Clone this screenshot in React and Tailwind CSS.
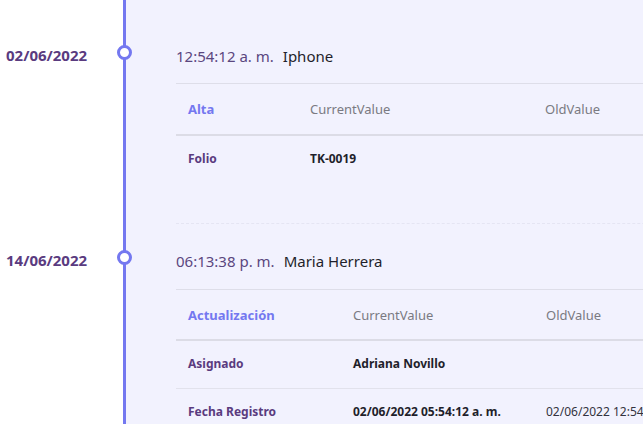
const entries = [
  {
    date: '02/06/2022',
    time: '12:54:12 a. m.',
    user: 'Iphone',
    action: 'Alta',
    cols: ['w-[122px]', 'w-[235px]'],
    rows: [{ field: 'Folio', current: 'TK-0019', old: '' }],
    first: true,
  },
  {
    date: '14/06/2022',
    time: '06:13:38 p. m.',
    user: 'Maria Herrera',
    action: 'Actualización',
    cols: ['w-[165px]', 'w-[193px]'],
    rows: [
      { field: 'Asignado', current: 'Adriana Novillo', old: '' },
      { field: 'Fecha Registro', current: '02/06/2022 05:54:12 a. m.', old: '02/06/2022 12:54:12 a. m.' },
    ],
  },
];

const Entry = ({ entry }) => (
  <div className="flex">
    {/* Date */}
    <div className={`w-[123px] shrink-0 pl-[6px] ${entry.first ? 'pt-[43px]' : 'pt-[24px]'}`}>
      <div className="h-[24px] leading-[24px] text-[15px] font-bold text-[#5a3b7f]">
        {entry.date}
      </div>
    </div>

    {/* Timeline + content */}
    <div className="relative flex-1 border-l-[3px] border-[#7478f0] bg-[#f2f2fe] pl-[50px]">
      <div
        className={`absolute left-[-9px] w-[15px] h-[15px] rounded-full border-[3px] border-[#7478f0] bg-white ${
          entry.first ? 'top-[45px]' : 'top-[26px]'
        }`}
      />
      <div
        className={`border-b border-dashed border-[#e5e5f3] ${
          entry.first ? 'pt-[44px] pb-[40px]' : 'pt-[26px] pb-[40px]'
        }`}
      >
        <div className="h-[24px] flex items-center gap-[9px] text-[15px] whitespace-nowrap">
          <span className="text-[#5b477f]">{entry.time}</span>
          <span className="text-[#1f1f2b]">{entry.user}</span>
        </div>

        <table className="mt-[15px] w-[720px] table-fixed border-collapse text-left">
          <colgroup>
            <col className={entry.cols[0]} />
            <col className={entry.cols[1]} />
            <col />
          </colgroup>
          <thead>
            <tr className="h-[51px] border-t border-b-2 border-t-[#dedee9] border-b-[#dcdce6]">
              <th className="pl-[12px] pt-[2px] text-[13px] font-bold text-[#7478f0]">{entry.action}</th>
              <th className="pl-[12px] pt-[2px] text-[13px] font-normal text-[#7a7a82]">CurrentValue</th>
              <th className="pl-[12px] pt-[2px] text-[13px] font-normal text-[#7a7a82]">OldValue</th>
            </tr>
          </thead>
          <tbody>
            {entry.rows.map((row, i) => (
              <tr
                key={row.field}
                className={`h-[48px] ${i < entry.rows.length - 1 ? 'border-b border-[#e2e2ec]' : ''}`}
              >
                <td className="pl-[12px] text-[12px] font-bold text-[#5a3b7f] whitespace-nowrap">{row.field}</td>
                <td className="pl-[12px] text-[12px] font-bold text-[#1f1f2b] whitespace-nowrap">{row.current}</td>
                <td className="pl-[12px] text-[12px] text-[#333340] whitespace-nowrap">{row.old}</td>
              </tr>
            ))}
          </tbody>
        </table>
      </div>
    </div>
  </div>
);

export default function App() {
  return (
    <div
      className="w-full h-screen overflow-hidden bg-white"
      style={{ fontFamily: '"Noto Sans", "Open Sans", sans-serif' }}
    >
      {entries.map((entry) => (
        <Entry key={entry.date} entry={entry} />
      ))}
    </div>
  );
}
